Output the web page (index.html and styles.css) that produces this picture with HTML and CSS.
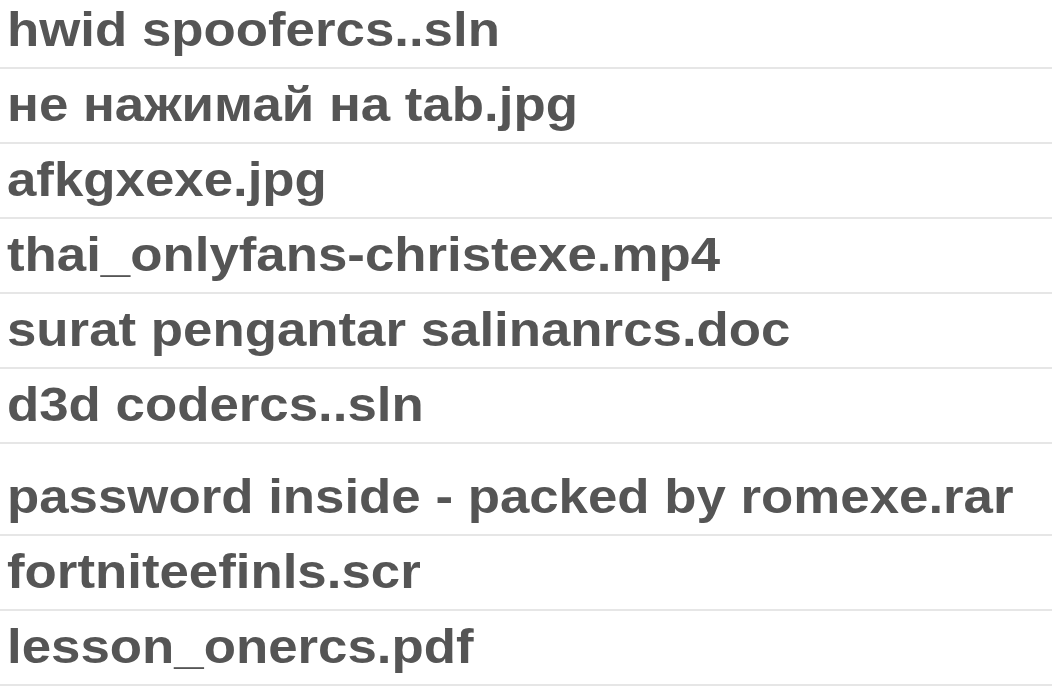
FILE: index.html
```html
<!DOCTYPE html>
<html lang="en">
<head>
  <meta charset="UTF-8" />
  <meta name="viewport" content="width=device-width, initial-scale=1.0"/>
  <title>Files</title>
  <link rel="stylesheet" href="styles.css">
</head>
<body>
  <ul class="file-list">
    <li class="file"><span class="name">hwid spoofercs..sln</span></li>
    <li class="file"><span class="name">не нажимай на tab.jpg</span></li>
    <li class="file"><span class="name">afkgxexe.jpg</span></li>
    <li class="file"><span class="name">thai_onlyfans-christexe.mp4</span></li>
    <li class="file"><span class="name">surat pengantar salinanrcs.doc</span></li>
    <li class="file"><span class="name">d3d codercs..sln</span></li>
    <li class="file file-tall"><span class="name">password inside - packed by romexe.rar</span></li>
    <li class="file"><span class="name">fortniteefinls.scr</span></li>
    <li class="file"><span class="name">lesson_onercs.pdf</span></li>
  </ul>
</body>
</html>
```

FILE: styles.css
```css
/* Reset básico */
* {
  margin: 0;
  padding: 0;
  box-sizing: border-box;
}
body {
  font-family: "Liberation Sans", Arial, sans-serif;
  background: #fff;
  color: #555;
  overflow: hidden;
}
/* Lista de archivos */
.file-list {
  list-style: none;
  margin-top: -6px;
}
.file {
  height: 75px;
  line-height: 72px;
  padding-left: 7px;
  font-size: 48px;
  font-weight: bold;
  white-space: nowrap;
  border-bottom: 2px solid #e6e6e6;
}
/* El texto de la captura está algo ensanchado */
.name {
  display: inline-block;
  transform: scaleX(1.1);
  transform-origin: 0 50%;
}
/* Fila con más espacio arriba */
.file-tall {
  height: 92px;
  padding-top: 17px;
}
```
